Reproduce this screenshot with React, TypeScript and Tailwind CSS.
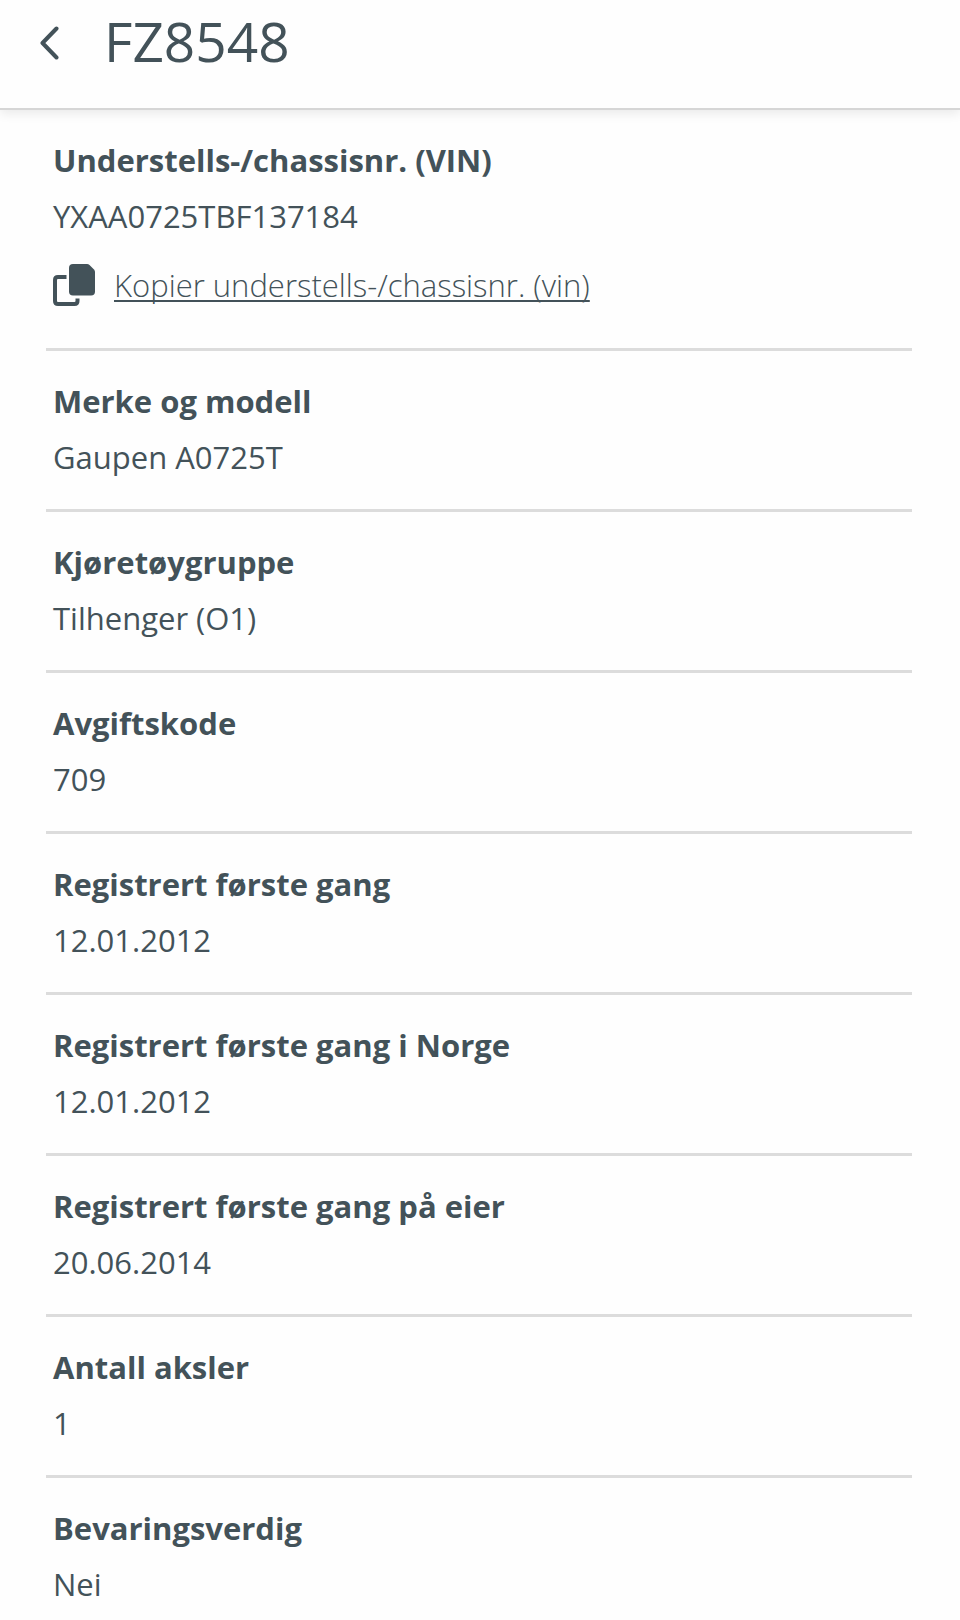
const details: { label: string; value: string; copyLabel?: string }[] = [
  {
    label: 'Understells-/chassisnr. (VIN)',
    value: 'YXAA0725TBF137184',
    copyLabel: 'Kopier understells-/chassisnr. (vin)',
  },
  { label: 'Merke og modell', value: 'Gaupen A0725T' },
  { label: 'Kjøretøygruppe', value: 'Tilhenger (O1)' },
  { label: 'Avgiftskode', value: '709' },
  { label: 'Registrert første gang', value: '12.01.2012' },
  { label: 'Registrert første gang i Norge', value: '12.01.2012' },
  { label: 'Registrert første gang på eier', value: '20.06.2014' },
  { label: 'Antall aksler', value: '1' },
  { label: 'Bevaringsverdig', value: 'Nei' },
];

function BackIcon() {
  return (
    <svg width="20" height="34" viewBox="0 0 20 34" fill="none" aria-hidden="true">
      <path
        d="M16.5 2.5 L2.5 17 L16.5 31.5"
        stroke="currentColor"
        strokeWidth="4"
        strokeLinecap="round"
        strokeLinejoin="round"
      />
    </svg>
  );
}

function CopyIcon() {
  return (
    <svg width="42" height="42" viewBox="0 0 42 42" fill="none" className="shrink-0" aria-hidden="true">
      <path d="M20 0 H34 Q35.5 0 36.5 1 L41 5.5 Q42 6.5 42 8 V27.5 Q42 31.5 38 31.5 H20 Q16 31.5 16 27.5 V4 Q16 0 20 0 Z" fill="currentColor" />
      <path d="M13.5 13 H5 Q2 13 2 16 V37 Q2 40 5 40 H21.5 Q24.5 40 24.5 37 V34.5" stroke="currentColor" strokeWidth="4" />
    </svg>
  );
}

export default function App() {
  return (
    <div className="min-h-screen bg-[#fefefe] font-['Open_Sans',sans-serif] text-[#435259]">
      <header className="flex items-center gap-11 border-b-2 border-[#d6d6d6] bg-[#fefefe] px-10 pt-px pb-[27px] shadow-[0_4px_10px_rgba(0,0,0,0.08)]">
        <button type="button" aria-label="Tilbake" className="pt-1">
          <BackIcon />
        </button>
        <h1 className="text-[55px] leading-[80px]">FZ8548</h1>
      </header>

      <main className="pr-12 pl-[46px]">
        <dl>
          {details.map((item) => (
            <div
              key={item.label}
              className="border-b-3 border-[#dcdcdc] px-[7px] pt-[22px] pb-6 last:border-b-0"
            >
              <dt className="text-[31px] leading-[56px] font-bold">{item.label}</dt>
              <dd className="text-[31px] leading-[56px]">{item.value}</dd>
              {item.copyLabel && (
                <dd className="pt-[13px] pb-[11px]">
                  <button type="button" className="flex items-center gap-[19px]">
                    <CopyIcon />
                    <span className="text-[31px] leading-[56px] font-light underline decoration-2 underline-offset-3 [text-decoration-skip-ink:none]">
                      {item.copyLabel}
                    </span>
                  </button>
                </dd>
              )}
            </div>
          ))}
        </dl>
      </main>
    </div>
  );
}
